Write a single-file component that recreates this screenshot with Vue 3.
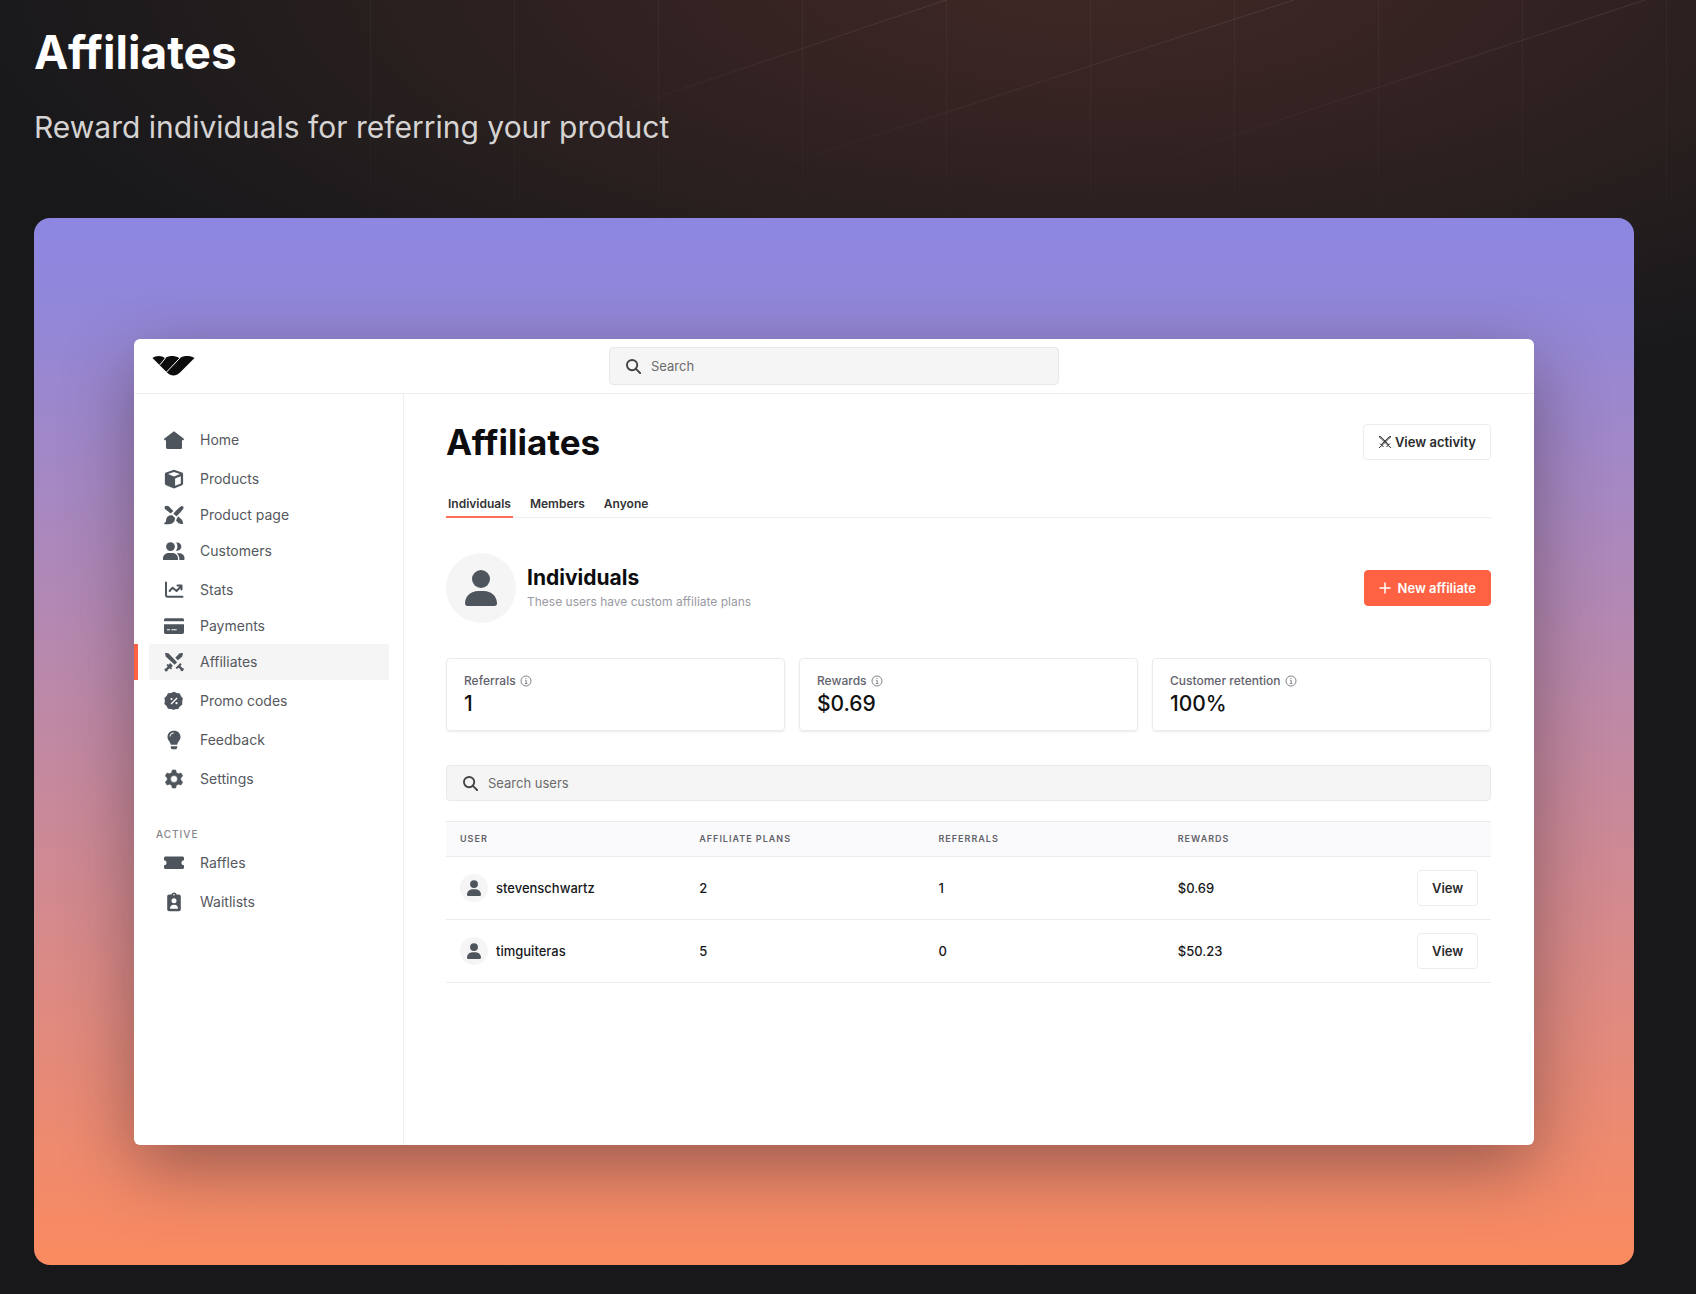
<script setup>
const groups = [
  [{ name: 'Home', icon: 'home' }],
  [
    { name: 'Products', icon: 'box' },
    { name: 'Product page', icon: 'tools' },
    { name: 'Customers', icon: 'users' },
  ],
  [
    { name: 'Stats', icon: 'chart' },
    { name: 'Payments', icon: 'card' },
    { name: 'Affiliates', icon: 'swords', active: true },
  ],
  [{ name: 'Promo codes', icon: 'promo' }],
  [{ name: 'Feedback', icon: 'bulb' }],
  [{ name: 'Settings', icon: 'gear' }],
]
const activeGroups = [
  [{ name: 'Raffles', icon: 'ticket' }],
  [{ name: 'Waitlists', icon: 'badge' }],
]
const navLists = [
  { title: '', groups },
  { title: 'ACTIVE', groups: activeGroups },
]
const icons = {
  home: '<path d="M10 1.2 19.6 8.6c.6.6.3 1.6-.5 1.6H18v7.200c0 1-.7 1.600-1.600 1.600H3.600C2.700 18.600 2 18 2 17.400V10.200H.9C.1 10.200-.2 9.200.4 8.600Z"/>',
  box: '<path fill-rule="evenodd" d="M10 .8 18 3.400c.7.3 1.100.8 1.100 1.500v9.700c0 .7-.4 1.300-1.100 1.600l-8 3.300-8-3.300c-.7-.3-1.100-.9-1.100-1.600V4.900c0-.7.4-1.200 1.100-1.500ZM10 3 4 5.100l6 2.300 6-2.300ZM11.100 9.400v7.400l5.700-2.400V7.200Z"/>',
  tools: '<path d="M1 1.300c1.200-1 3-.8 4 .3L9.300 6 6.700 8.600 1.300 4.300C.5 3.600.3 2.100 1 1.300Z"/><path d="M17 1.300c1-.9 3.300.7 2.400 2.200-1.800 2.700-4.300 5.300-7 7.800L9.300 8.700C11.500 6 14.300 3.500 17 1.300Z"/><path d="M8.300 10.300 11 13c.3 3.800-2.700 6.200-6 6.200H.8c-.9 0-.8-1.200.2-1.700 1.600-.8.7-2 1.300-3.800.8-2.500 3.300-4 6-3.400ZM14 11.200l3.900 3.500c.8.8 1.300 4.300 1.300 4.300s-3.700.2-4.600-.7L12 15.600Z"/>',
  users: '<g transform="translate(-1)"><circle cx="7.500" cy="5.600" r="4.400"/><path d="M0 19v-1.600C0 14 2.700 12 6.300 12h2.400c3.600 0 6.300 2 6.300 5.400V19ZM13.300 1.500a4.200 4.200 0 1 1-.4 8.100c1-1 1.500-2.400 1.500-4 0-1.500-.4-2.900-1.100-4.100ZM16.400 19c0-2.800-.6-5.100-2.600-6.800h2c3.200 0 5.700 1.900 5.700 4.900V18c0 .6-.4 1-1 1Z"/></g>',
  chart: '<path fill="none" stroke="currentColor" stroke-width="2" stroke-linecap="round" stroke-linejoin="round" d="M2 2.500v12.600c0 1 .6 1.700 1.700 1.700H18.500M5.600 11l3-3.300 4 3.300 4.200-4.500M13.500 5.500h4v4"/>',
  card: '<path fill-rule="evenodd" d="M1.700 2.300h16.600c1 0 1.700.6 1.700 1.500v1.400H0V3.800c0-.9.7-1.500 1.700-1.500ZM0 8.200h20v8c0 1-.7 1.700-1.700 1.700H1.700c-1 0-1.700-.7-1.700-1.700Zm3 5v1h3v-1Zm4.500 0v1h5.200v-1Z"/>',
  swords: '<path d="M1 .9 4.400 1.300 13.100 10.200 10.700 12.700 1.700 4.500ZM19 .9 15.600 1.300 11.300 5.700 13.900 8.300 18.300 4.500ZM6.100 10.900 8.900 13.700 7.200 15.400 8.200 16.300 6.900 17.600 5.500 16.300 3.500 18.200 3.400 19.300 1.800 19.600.5 18.200.8 16.600 1.900 16.500 3.700 14.500 2.400 13.100 3.700 11.900 4.700 12.700ZM16.400 10.900l1.300 1.300-1.300 1.900 1.900 2h1.100l.4 1.700-1.400 1.500-1.600-.3-.1-1.200-2-2-1.800 1.300-1.300-1.300Z"/>',
  promo: '<path fill-rule="evenodd" d="m10 .8 2.700 1.300 3.100.3 1.200 2.800 1.900 2.400-.7 2.900.1 3.100-2.500 1.800-1.600 2.700-3.200.1L10 19.100l-2.800-1.200-3.200-.1-1.400-2.700-2.200-2 .5-3-.5-3 2.200-2.200 1.300-2.700 3.100-.2ZM7.500 6.900a1.100 1.100 0 1 0 0 2.200 1.100 1.100 0 0 0 0-2.200Zm5 4.200a1.100 1.100 0 1 0 0 2.200 1.100 1.100 0 0 0 0-2.200Zm.2-4.600-6.100 6 .9.900 6.100-6Z"/>',
  bulb: '<path fill-rule="evenodd" d="M10 .7c4 0 6.500 2.700 6.500 6.200 0 3.300-2.900 4.600-3.300 7.800H6.800C6.400 11.500 3.500 10.200 3.500 6.900 3.500 3.400 6 .7 10 .7ZM9.700 2.500C7.300 2.600 5.700 4.200 5.500 6.400h1.100C6.800 4.600 8 3.600 9.700 3.600ZM6.800 16.200h6.400v1.200c0 1.100-.8 1.900-1.900 1.900H8.700c-1.100 0-1.900-.8-1.900-1.900Z"/>',
  gear: '<path fill-rule="evenodd" stroke="currentColor" stroke-width=".6" stroke-linejoin="round" d="M8.300 1h3.400l.7 2.700 1.900 1.100 2.700-.8 1.700 3-2 1.900v2.200l2 1.900-1.700 3-2.700-.8-1.900 1.100-.7 2.700H8.300l-.7-2.700-1.900-1.100-2.700.8-1.700-3 2-1.900V8.900l-2-1.900L3 4l2.700.8 1.900-1.100ZM10 6.500a3.500 3.500 0 1 0 0 7 3.500 3.500 0 0 0 0-7Z"/>',
  ticket: '<path d="M1.500 3.400h17c.8 0 1.500.6 1.500 1.500v2.300a2.300 2.300 0 0 0 0 5v2.400c0 .9-.7 1.500-1.500 1.500h-17c-.8 0-1.500-.6-1.500-1.500v-2.400a2.300 2.300 0 0 0 0-5V4.900c0-.9.7-1.500 1.500-1.500Z"/>',
  badge: '<path fill-rule="evenodd" d="M7.400 2.500a2.700 2.700 0 0 1 5.200 0h2.200c1.200 0 2 .8 2 2v12.700c0 1.200-.8 2-2 2H5.200c-1.200 0-2-.8-2-2V4.500c0-1.200.8-2 2-2ZM10 6.200a2.500 2.500 0 1 0 0 5 2.500 2.500 0 0 0 0-5Zm-4 10.600h8c0-2.700-1.300-4.100-4-4.100s-4 1.400-4 4.100ZM10 2a.8.8 0 1 0 0 1.600A.8.8 0 0 0 10 2Z"/>',
}
const tabs = ['Individuals', 'Members', 'Anyone']
const stats = [
  { label: 'Referrals', value: '1' },
  { label: 'Rewards', value: '$0.69' },
  { label: 'Customer retention', value: '100%' },
]
const users = [
  { name: 'stevenschwartz', plans: 2, referrals: 1, rewards: '$0.69' },
  { name: 'timguiteras', plans: 5, referrals: 0, rewards: '$50.23' },
]
const gridLines = [370, 514, 658, 802, 946, 1090, 1234, 1378, 1522, 1666]
</script>

<template>
  <div class="page">
    <svg class="backdrop" aria-hidden="true">
      <defs>
        <linearGradient id="fade" x1="0" y1="0" x2="0" y2="1">
          <stop offset="0" stop-color="#fff" stop-opacity="0.04" />
          <stop offset="1" stop-color="#fff" stop-opacity="0.01" />
        </linearGradient>
        <linearGradient id="ray" x1="1" y1="0" x2="0" y2="0">
          <stop offset="0" stop-color="#fff" stop-opacity="0.09" />
          <stop offset="1" stop-color="#fff" stop-opacity="0" />
        </linearGradient>
      </defs>
      <rect v-for="x in gridLines" :key="x" :x="x" y="0" width="1" height="220" fill="url(#fade)" />
      <g stroke="url(#ray)">
        <path d="M946 0 560 130" />
        <path d="M1294 0 700 192" />
        <path d="M1645 0 1090 182" />
      </g>
    </svg>

    <header class="hero">
      <h1>Affiliates</h1>
      <p>Reward individuals for referring your product</p>
    </header>

    <section class="banner">
      <div class="window">
        <div class="topbar">
          <svg class="logo" viewBox="0 0 42 20" aria-label="Logo">
            <path d="M0 2C3-.4 9-1 12.500 2.300 16-.8 23-.8 27 2.300 31-.8 38-.8 42 2L27.500 16.500c-4 4-9 4-13 0Z" />
            <path class="gap" d="M13 2 7.300 8.900M27.500 1.900 13.900 16.200" />
          </svg>
          <label class="field top-search">
            <svg viewBox="0 0 16 16"><circle cx="6.500" cy="6.500" r="5.500" /><path d="m10.600 10.600 4.600 4.600" /></svg>
            <input type="text" placeholder="Search" aria-label="Search" />
          </label>
        </div>

        <div class="body">
          <nav class="sidebar">
            <div v-for="(list, l) in navLists" :key="l" class="nav-list">
              <h2 v-if="list.title">{{ list.title }}</h2>
              <div v-for="(group, g) in list.groups" :key="g" class="group">
                <a v-for="item in group" :key="item.name" href="#" class="nav-item" :class="{ active: item.active }">
                  <svg viewBox="0 0 20 20" v-html="icons[item.icon]"></svg>
                  <span>{{ item.name }}</span>
                </a>
              </div>
            </div>
          </nav>

          <main class="main">
            <div class="title-row">
              <h2>Affiliates</h2>
              <button class="btn" type="button">
                <svg class="cross" viewBox="0 0 14 14">
                  <path d="M1 1.500 10.700 11M1 1.500l2 .4 8 8M13 1.500 3.300 11M13 1.500l-2 .4-8 8M2 8.500l3.500 3.500M1 13l2.300-2.200M12 8.500 8.500 12M13 13l-2.300-2.200" />
                </svg>View activity
              </button>
            </div>

            <div class="tabs">
              <button v-for="(tab, i) in tabs" :key="tab" type="button" :class="{ selected: i === 0 }">{{ tab }}</button>
            </div>

            <div class="intro">
              <div class="avatar large">
                <svg viewBox="0 0 32 36"><circle cx="16" cy="9" r="9" /><path d="M2.500 36C1 36 0 35 0 33.500 0 26 6 21 13 21h6c7 0 13 5 13 12.500 0 1.500-1 2.500-2.500 2.500Z" /></svg>
              </div>
              <div class="intro-text">
                <h3>Individuals</h3>
                <p>These users have custom affiliate plans</p>
              </div>
              <button class="btn primary" type="button">
                <svg viewBox="0 0 12 12"><path stroke-width="1.500" d="M6 .5v11M.5 6h11" /></svg>New affiliate
              </button>
            </div>

            <div class="stats">
              <div v-for="stat in stats" :key="stat.label" class="stat">
                <div class="stat-label">
                  {{ stat.label }}
                  <svg viewBox="0 0 12 12"><circle cx="6" cy="6" r="5" /><path d="M5 5.300h1.200v3.200M4.800 8.500h2.600M6 3v1" /></svg>
                </div>
                <div class="stat-value">{{ stat.value }}</div>
              </div>
            </div>

            <label class="field user-search">
              <svg viewBox="0 0 16 16"><circle cx="6.500" cy="6.500" r="5.500" /><path d="m10.600 10.600 4.600 4.600" /></svg>
              <input type="text" placeholder="Search users" aria-label="Search users" />
            </label>

            <table>
              <thead>
                <tr>
                  <th>USER</th>
                  <th>AFFILIATE PLANS</th>
                  <th>REFERRALS</th>
                  <th>REWARDS</th>
                  <th class="action"></th>
                </tr>
              </thead>
              <tbody>
                <tr v-for="user in users" :key="user.name">
                  <td>
                    <div class="user">
                      <div class="avatar">
                        <svg viewBox="0 0 32 36"><circle cx="16" cy="9" r="9" /><path d="M2.500 36C1 36 0 35 0 33.500 0 26 6 21 13 21h6c7 0 13 5 13 12.500 0 1.500-1 2.500-2.500 2.500Z" /></svg>
                      </div>
                      {{ user.name }}
                    </div>
                  </td>
                  <td>{{ user.plans }}</td>
                  <td>{{ user.referrals }}</td>
                  <td>{{ user.rewards }}</td>
                  <td class="action"><button class="btn" type="button">View</button></td>
                </tr>
              </tbody>
            </table>
          </main>
        </div>
      </div>
    </section>
  </div>
</template>

<style>
body {
  margin: 0;
  background: #18181b;
}
</style>

<style scoped>
* {
  box-sizing: border-box;
}
.page {
  position: relative;
  min-height: 100vh;
  padding: 24px 62px 28px 34px;
  font-family: Inter, "Liberation Sans", sans-serif;
  background: radial-gradient(ellipse 1150px 440px at 1100px -30px, #402826 0%, #342322 35%, #271f1e 65%, #18181b 100%) #18181b;
}
.backdrop {
  position: absolute;
  top: 0;
  left: 0;
  width: 100%;
  height: 220px;
  pointer-events: none;
}
h1, h2, h3, p {
  margin: 0;
}
.hero {
  position: relative;
  height: 194px;
  color: #fff;
}
.hero h1 {
  font-size: 46px;
  line-height: 56px;
  font-weight: 700;
}
.hero p {
  margin-top: 25px;
  font-size: 30px;
  line-height: 44px;
  color: #d6d3d3;
}
.banner {
  position: relative;
  padding: 121px 100px 120px;
  border-radius: 16px;
  background: linear-gradient(#8e87e2 0%, #9187da 8%, #fb8b60 100%);
}
.window {
  border-radius: 6px;
  background: #fff;
  box-shadow: 0 22px 70px rgba(40, 25, 30, 0.42);
}
.topbar {
  position: relative;
  display: flex;
  align-items: center;
  justify-content: center;
  height: 55px;
  border-bottom: 1px solid #efeff1;
}
.logo {
  position: absolute;
  left: 18px;
  top: 17px;
  width: 43px;
  height: 20px;
  fill: #0c0c0c;
}
.logo .gap {
  stroke: #fff;
  stroke-width: 1;
}
.field {
  display: flex;
  align-items: center;
  gap: 10px;
  padding: 0 16px;
  border: 1px solid #e9e9ec;
  border-radius: 4px;
  background: #f5f5f5;
}
.field svg {
  flex: none;
  width: 15px;
  height: 15px;
  fill: none;
  stroke: #444;
  stroke-width: 2;
  stroke-linecap: round;
}
.field input {
  flex: 1;
  min-width: 0;
  padding: 0;
  border: 0;
  outline: 0;
  background: none;
  font: 13px/20px Inter, "Liberation Sans", sans-serif;
}
.field input::placeholder {
  color: #6b6b6b;
  opacity: 1;
}
.top-search {
  width: 450px;
  height: 38px;
}
.body {
  display: flex;
  min-height: 751px;
}
.sidebar {
  flex: none;
  width: 270px;
  padding-top: 28px;
  border-right: 1px solid #efeff1;
}
.nav-list {
  display: flex;
  flex-direction: column;
  gap: 3px;
}
.sidebar h2 {
  margin-top: 29px;
  padding-left: 22px;
  font-size: 10px;
  line-height: 16px;
  font-weight: 500;
  letter-spacing: 1px;
  color: #85858a;
}
.nav-item {
  position: relative;
  display: flex;
  align-items: center;
  gap: 16px;
  height: 36px;
  margin: 0 14px 0 15px;
  padding-left: 15px;
  font-size: 14px;
  line-height: 20px;
  color: #55585e;
  text-decoration: none;
}
.nav-item svg {
  width: 20px;
  height: 20px;
  fill: currentColor;
  overflow: visible;
  color: #4f555d;
}
.nav-item.active {
  border-radius: 2px;
  background: #f5f5f5;
}
.nav-item.active::before {
  content: "";
  position: absolute;
  left: -15px;
  top: 0;
  width: 4px;
  height: 36px;
  background: #ff6243;
}
.main {
  flex: 1;
  min-width: 0;
  padding: 28px 43px 0 42px;
  color: #18181b;
}
.title-row,
.intro {
  display: flex;
  align-items: center;
  justify-content: space-between;
}
.title-row h2 {
  font-size: 35px;
  line-height: 40px;
  font-weight: 700;
  color: #0d0d0f;
}
.btn {
  display: inline-flex;
  align-items: center;
  justify-content: center;
  height: 36px;
  padding: 0 14px;
  border: 1px solid #ededf0;
  border-radius: 4px;
  background: #fff;
  font: 600 13px/20px Inter, "Liberation Sans", sans-serif;
  color: #2a2a2d;
}
.btn .cross {
  width: 14px;
  height: 14px;
  margin-right: 3px;
  fill: none;
  stroke: #333;
  stroke-width: 1;
}
.btn.primary {
  border-color: #ff6243;
  background: #ff6243;
  color: #fff;
}
.btn.primary svg {
  width: 12px;
  height: 12px;
  margin-right: 7px;
  stroke: #fff;
}
.tabs {
  display: flex;
  gap: 15px;
  margin-top: 32px;
  border-bottom: 1px solid #efeff1;
}
.tabs button {
  height: 24px;
  margin-bottom: -1px;
  padding: 0 2px 2px;
  border: 0;
  border-bottom: 2px solid transparent;
  background: none;
  font: 600 12px/20px Inter, "Liberation Sans", sans-serif;
  color: #333336;
}
.tabs .selected {
  border-bottom-color: #ff6f5a;
}
.intro {
  margin-top: 35px;
}
.avatar {
  display: flex;
  align-items: center;
  justify-content: center;
  flex: none;
  width: 28px;
  height: 28px;
  border-radius: 50%;
  background: #f5f5f5;
}
.avatar svg {
  width: 14px;
  height: 16px;
  fill: #4f555d;
}
.avatar.large {
  width: 70px;
  height: 70px;
}
.avatar.large svg {
  width: 32px;
  height: 36px;
}
.intro-text {
  flex: 1;
  margin-left: 11px;
}
.intro-text h3 {
  font-size: 21px;
  line-height: 28px;
  font-weight: 700;
  color: #0d0d0f;
}
.intro-text p {
  font-size: 12px;
  line-height: 20px;
  color: #9a9aa2;
}
.stats {
  display: grid;
  grid-template-columns: repeat(3, 1fr);
  gap: 14px;
  margin-top: 35px;
}
.stat {
  height: 73px;
  padding: 12px 17px;
  border: 1px solid #ebebee;
  border-radius: 4px;
  box-shadow: 0 1px 2px rgba(0, 0, 0, 0.08);
}
.stat-label {
  display: flex;
  align-items: center;
  gap: 4px;
  font-size: 12px;
  line-height: 20px;
  font-weight: 500;
  color: #62626b;
}
.stat-label svg {
  width: 12px;
  height: 12px;
  fill: none;
  stroke: #85858c;
}
.stat-value {
  font-size: 21px;
  line-height: 26px;
  font-weight: 500;
  color: #111;
}
.user-search {
  height: 36px;
  margin-top: 34px;
}
table {
  width: 100%;
  margin-top: 20px;
  table-layout: fixed;
  border-collapse: collapse;
}
th,
td {
  padding: 0 14px;
  text-align: left;
  border-bottom: 1px solid #ebebee;
}
th {
  height: 35px;
  border-top: 1px solid #ebebee;
  background: #fafafc;
  font-size: 9px;
  line-height: 16px;
  font-weight: 600;
  letter-spacing: 1px;
  color: #62626a;
}
td {
  height: 63px;
  font-size: 13px;
  line-height: 20px;
  font-weight: 500;
  color: #18181b;
}
.action {
  width: 88px;
  text-align: right;
}
.user {
  display: flex;
  align-items: center;
  gap: 8px;
}
</style>
